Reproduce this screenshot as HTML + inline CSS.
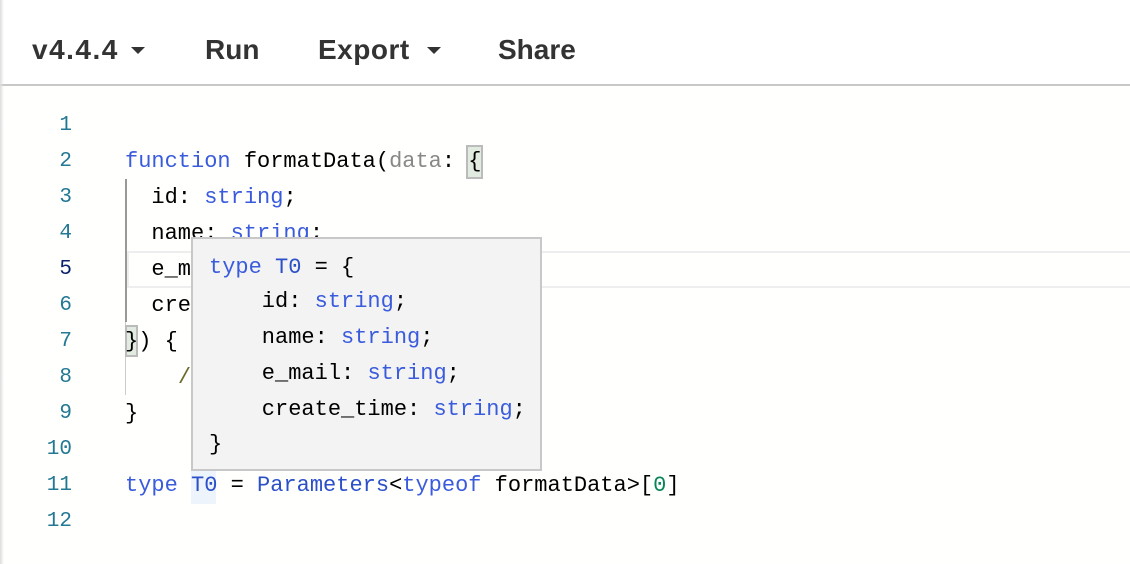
<!DOCTYPE html>
<html><head><meta charset="utf-8"><style>
*{margin:0;padding:0;box-sizing:border-box}
body{width:1130px;height:564px;overflow:hidden;background:#fffffe;position:relative;font-family:"Liberation Mono",monospace}
.hdr{position:absolute;left:0;top:0;width:1130px;height:86px;background:#fff;border-bottom:2px solid #c8c8c8;font-family:"Liberation Sans",sans-serif;font-weight:bold;font-size:28px;color:#333}
.hdr span{position:absolute;top:32px;line-height:36px}
.caret{position:absolute;width:0;height:0;border-left:7px solid transparent;border-right:7px solid transparent;border-top:7px solid #333;top:47px}
.shadow{position:absolute;left:0;top:0;width:4px;height:564px;background:linear-gradient(to right,#ddd,transparent)}
.ln{position:absolute;left:20px;width:52px;text-align:right;font-size:21px;color:#237893;line-height:36px}
.code{position:absolute;font-size:22px;line-height:36px;color:#000;white-space:pre}
.k{color:#3a5cdc}.t{color:#2b50c8}.g{color:#888}.n{color:#098658}.c{color:#6a6a2a}
.cur{position:absolute;left:127px;top:251px;width:1003px;height:37px;border:2px solid #eee;border-right:none}
.tip{position:absolute;left:191px;top:237px;width:351px;height:234px;background:#f3f3f3;border:2px solid #c8c8c8}
.tip .code{left:16px}
</style></head><body>
<div class="hdr">
<span style="left:32px;letter-spacing:1.5px">v4.4.4</span><div class="caret" style="left:131px"></div>
<span style="left:205px">Run</span>
<span style="left:318px;letter-spacing:0.5px">Export</span><div class="caret" style="left:427px"></div>
<span style="left:498px">Share</span>
</div>
<div class="shadow"></div>
<div class="cur"></div>
<div style="position:absolute;left:125px;top:179px;width:2px;height:143px;background:#999"></div>
<div style="position:absolute;left:125px;top:322px;width:1px;height:73px;background:#ccc"></div>
<div style="position:absolute;left:466px;top:145px;width:17px;height:34px;background:#e2ebe0;border:2px solid #bbb"></div>
<div style="position:absolute;left:125px;top:325px;width:13px;height:32px;background:#e2ebe0;border:2px solid #bbb"></div>
<div style="position:absolute;left:191px;top:470px;width:25px;height:34px;background:#eef4fc"></div>
<div class="ln" style="top:108px">1</div>
<div class="ln" style="top:144px">2</div>
<div class="ln" style="top:180px">3</div>
<div class="ln" style="top:216px">4</div>
<div class="ln" style="top:252px;color:#0b216f">5</div>
<div class="ln" style="top:288px">6</div>
<div class="ln" style="top:324px">7</div>
<div class="ln" style="top:360px">8</div>
<div class="ln" style="top:396px">9</div>
<div class="ln" style="top:432px">10</div>
<div class="ln" style="top:468px">11</div>
<div class="ln" style="top:504px">12</div>
<div class="code" style="left:125px;top:144px"><span class="k">function</span> formatData(<span class="g">data</span>: {</div>
<div class="code" style="left:125px;top:180px">  id: <span class="k">string</span>;</div>
<div class="code" style="left:125px;top:216px">  name: <span class="k">string</span>;</div>
<div class="code" style="left:125px;top:252px">  e_mail: <span class="k">string</span>;</div>
<div class="code" style="left:125px;top:288px">  create_time: <span class="k">string</span>;</div>
<div class="code" style="left:125px;top:324px">}) {</div>
<div class="code" style="left:125px;top:360px">    <span class="c">// ...</span></div>
<div class="code" style="left:125px;top:396px">}</div>
<div class="code" style="left:125px;top:468px"><span class="k">type</span> <span class="t">T0</span> = <span class="t">Parameters</span>&lt;<span class="k">typeof</span> formatData&gt;[<span class="n">0</span>]</div>
<div class="tip">
<div class="code" style="top:11px"><span class="k">type</span> <span class="t">T0</span> = {</div>
<div class="code" style="top:45px">    id: <span class="k">string</span>;</div>
<div class="code" style="top:81px">    name: <span class="k">string</span>;</div>
<div class="code" style="top:117px">    e_mail: <span class="k">string</span>;</div>
<div class="code" style="top:153px">    create_time: <span class="k">string</span>;</div>
<div class="code" style="top:188px">}</div>
</div>
</body></html>
